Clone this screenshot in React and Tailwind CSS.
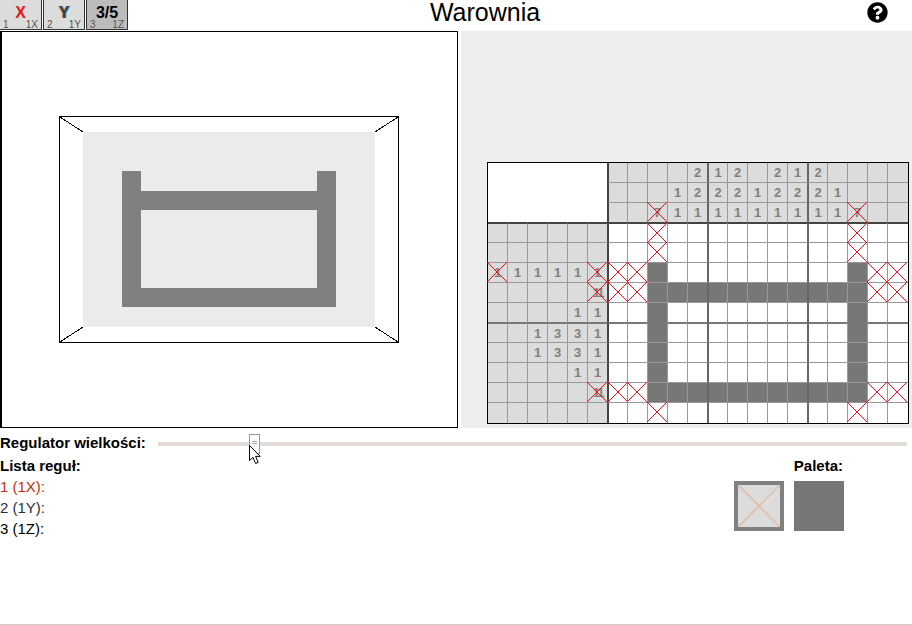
import React from 'react';
import clsx from 'clsx';
import { FaQuestionCircle } from 'react-icons/fa';

// top clue rows over the 15 play columns, "x" prefix = crossed out
const topClues = [
  ['', '', '', '', '2', '1', '2', '', '2', '1', '2', '', '', '', ''],
  ['', '', '', '1', '2', '2', '2', '1', '2', '2', '2', '1', '', '', ''],
  ['', '', 'x7', '1', '1', '1', '1', '1', '1', '1', '1', '1', 'x7', '', ''],
];

const leftClues = [
  ['', '', '', '', '', ''],
  ['', '', '', '', '', ''],
  ['x1', '1', '1', '1', '1', 'x1'],
  ['', '', '', '', '', 'x11'],
  ['', '', '', '', '1', '1'],
  ['', '', '1', '3', '3', '1'],
  ['', '', '1', '3', '3', '1'],
  ['', '', '', '', '1', '1'],
  ['', '', '', '', '', 'x11'],
  ['', '', '', '', '', ''],
];

// . empty, # filled, x crossed
const board = [
  '..x.........x..',
  '..x.........x..',
  'xx#.........#xx',
  'xx###########xx',
  '..#.........#..',
  '..#.........#..',
  '..#.........#..',
  '..#.........#..',
  'xx###########xx',
  '..x.........x..',
];

const Cross = () => (
  <svg viewBox="0 0 20 20" className="absolute -left-px -top-px w-5 h-5" shapeRendering="crispEdges">
    <line x1="0" y1="0" x2="20" y2="20" stroke="#e8141c" strokeWidth="1" />
    <line x1="20" y1="0" x2="0" y2="20" stroke="#e8141c" strokeWidth="1" />
  </svg>
);

const Cell = ({ r, c, kind, text, crossed }) => {
  const header = kind === 'clue';
  return (
    <div
      className={clsx(
        'relative flex items-center justify-center text-[13px] font-bold text-[#808080] border-[#999]',
        kind === 'clue' && 'bg-[#dcdcdc]',
        kind === 'fill' && 'bg-[#777] border-[#888]',
        kind === 'empty' && 'bg-white',
        c < 20 && 'border-r',
        r < 12 && 'border-b',
        c === 5 && 'border-r-[#444]',
        c === 6 && 'border-l border-l-[#444]',
        (c === 10 || c === 15) && 'border-r-[#666]',
        (c === 11 || c === 16) && 'border-l border-l-[#666]',
        r === 2 && 'border-b-[#444]',
        r === 3 && 'border-t border-t-[#444]',
        r === 7 && 'border-b-[#777]',
        r === 8 && 'border-t border-t-[#777]',
      )}
    >
      <span className={clsx(text && text.length > 1 && 'tracking-[-2px]', header && 'leading-none')}>{text}</span>
      {crossed && <Cross />}
    </div>
  );
};

const Nonogram = () => {
  const cells = [];
  topClues.forEach((row, r) => {
    row.forEach((v, i) => {
      cells.push(<Cell key={`t${r}-${i}`} r={r} c={i + 6} kind="clue" text={v.replace('x', '')} crossed={v.startsWith('x')} />);
    });
  });
  leftClues.forEach((row, i) => {
    const r = i + 3;
    row.forEach((v, c) => {
      cells.push(<Cell key={`l${r}-${c}`} r={r} c={c} kind="clue" text={v.replace('x', '')} crossed={v.startsWith('x')} />);
    });
    board[i].split('').forEach((v, j) => {
      cells.push(<Cell key={`b${r}-${j}`} r={r} c={j + 6} kind={v === '#' ? 'fill' : 'empty'} crossed={v === 'x'} />);
    });
  });

  return (
    <div className="grid grid-cols-[repeat(21,20px)] grid-rows-[repeat(13,20px)] w-max border border-black bg-white">
      <div className="col-span-6 row-span-3 bg-white border-r border-b border-r-[#444] border-b-[#444]" />
      {cells}
    </div>
  );
};

const AxisButton = ({ label, left, right, active, color, first }) => (
  <div
    className={clsx(
      'w-[42px] h-[30px] flex flex-col items-center border-r border-b border-[#333]',
      !first && 'border-l',
      active ? 'bg-[#bcbcbc]' : 'bg-[#dcdcdc]',
    )}
  >
    <span className={clsx('text-base font-bold leading-[14px] mt-[6px]', color)}>{label}</span>
    <span className="w-full mt-auto mb-[2px] flex justify-between px-[3px] text-[10px] leading-[9px] text-[#555]">
      <span>{left}</span>
      <span>{right}</span>
    </span>
  </div>
);

const Preview = () => (
  <svg className="block w-full h-full" viewBox="0 0 455 395" shapeRendering="crispEdges">
    <rect x="81" y="100" width="292" height="195" fill="#ebebeb" />
    <path d="M120 139h19v20h176v-20h19v136h-214zM139 178v78h176v-78z" fill="#808080" fillRule="evenodd" />
    <rect x="57.5" y="84.5" width="339" height="226" fill="none" stroke="#000" />
    <line x1="58" y1="85" x2="81" y2="100" stroke="#000" />
    <line x1="396" y1="85" x2="373" y2="100" stroke="#000" />
    <line x1="58" y1="310" x2="81" y2="295" stroke="#000" />
    <line x1="396" y1="310" x2="373" y2="295" stroke="#000" />
  </svg>
);

export default function App() {
  return (
    <div className="relative w-[912px] h-[625px] overflow-hidden bg-white border-b border-[#ccc] text-black font-['Liberation_Sans',Arial,sans-serif]">
      <header className="flex h-[31px]">
        <div className="flex gap-px w-[128px] shrink-0">
          <AxisButton first label="X" left="1" right="1X" color="text-[#e8141c]" />
          <AxisButton label="Y" left="2" right="1Y" color="text-[#2a3a4a] [text-shadow:-1px_0_#e8a050,1px_0_#4a9ad8]" />
          <AxisButton active label="3/5" left="3" right="1Z" color="text-black" />
        </div>
        <h1 className="flex-1 text-center text-[25px] leading-[25px] font-normal">Warownia</h1>
        <div className="w-[70px] flex justify-center pt-[2px]">
          <FaQuestionCircle size={21} />
        </div>
      </header>

      <div className="flex h-[397px] gap-[3px]">
        <div className="w-[458px] border border-l-2 border-black">
          <Preview />
        </div>
        <div className="flex-1 bg-[#eeeeee] flex flex-col justify-end pl-[26px] pb-[4px]">
          <Nonogram />
        </div>
      </div>

      <div className="flex h-[27px] pt-1 items-start text-[15px] leading-[21px]">
        <span className="font-bold w-[158px] shrink-0">Regulator wielkości:</span>
        <div className="relative w-[749px] h-1 mt-[10px] bg-[#e2ddd8]">
          <div className="absolute left-[91px] -top-[8px] w-[11px] h-[20px] bg-white border border-[#999] flex flex-col items-center pt-1.5 gap-px">
            <span className="w-[5px] h-px bg-[#aaa]" />
            <span className="w-[5px] h-px bg-[#aaa]" />
          </div>
          <svg viewBox="0 0 13 19" className="absolute left-[91px] top-[3px] w-[13px] h-[19px]">
            <path d="M.5.5v15l3.5-3.2 2.6 6.2 2.6-1.1-2.6-6h4.6z" fill="#fff" stroke="#000" strokeWidth="1" />
          </svg>
        </div>
      </div>

      <div className="flex justify-between text-[15px] leading-[21px] pr-[68px]">
        <div>
          <div className="font-bold">Lista reguł:</div>
          <div className="text-[#c8300c]">1 (1X):</div>
          <div className="text-[#26323c]">2 (1Y):</div>
          <div>3 (1Z):</div>
        </div>
        <div className="w-[110px]">
          <div className="font-bold text-right pr-px">Paleta:</div>
          <div className="flex gap-[10px] mt-[5px]">
            <div className="w-[50px] h-[50px] border-4 border-[#808080] bg-[#dcdcdc]">
              <svg viewBox="0 0 42 42" className="block w-full h-full">
                <line x1="0" y1="0" x2="42" y2="42" stroke="#e6b48c" strokeWidth="1.2" />
                <line x1="42" y1="0" x2="0" y2="42" stroke="#e6b48c" strokeWidth="1.2" />
              </svg>
            </div>
            <div className="w-[50px] h-[50px] bg-[#777]" />
          </div>
        </div>
      </div>
    </div>
  );
}
